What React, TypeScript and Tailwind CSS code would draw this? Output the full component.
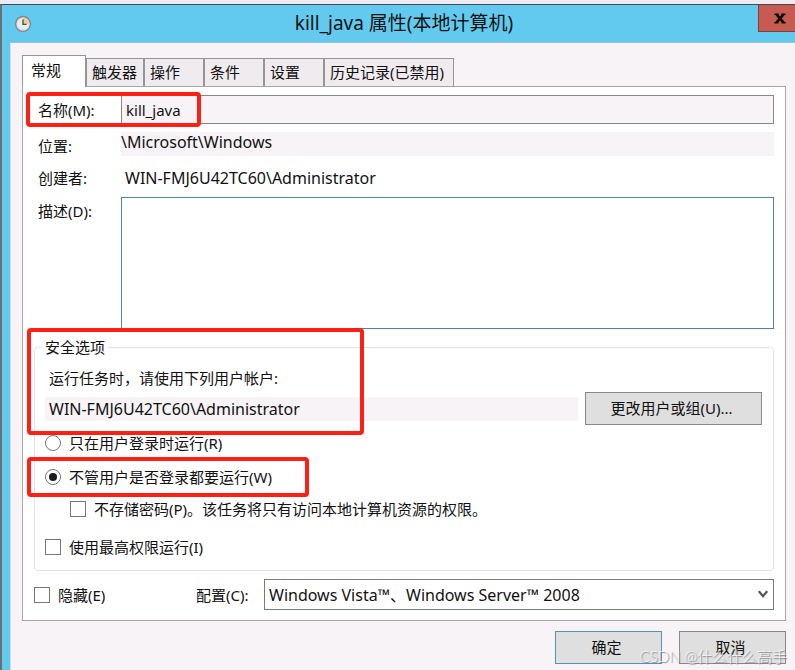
import React, { useState } from 'react';
import clsx from 'clsx';

const TABS = [
    { label: '常规', width: 'min-w-16' },
    { label: '触发器', width: 'min-w-[58px]' },
    { label: '操作', width: 'min-w-[60px]' },
    { label: '条件', width: 'min-w-[60px]' },
    { label: '设置', width: 'min-w-[60px]' },
    { label: '历史记录(已禁用)', width: 'min-w-[130px]' },
];

const ClockIcon: React.FC = () => (
    <svg width="18" height="18" viewBox="0 0 18 18" aria-hidden="true">
        <circle cx="9" cy="9" r="7.4" fill="#e9edf0" stroke="#858a8e" strokeWidth="1.6" />
        <path d="M9 9V2.6A6.4 6.4 0 0 1 15.4 9Z" fill="#f3cd78" />
        <circle cx="9" cy="9" r="6" fill="none" stroke="#d3d8db" strokeWidth="0.8" />
        <path d="M9 4.4V9.4H12.6" fill="none" stroke="#4b5258" strokeWidth="1.4" />
    </svg>
);

const CloseIcon: React.FC = () => (
    <svg width="12" height="11" viewBox="0 0 12 11" aria-hidden="true">
        <path d="M0.4 0.5H4.8V1.8L6 3.5L7.3 1.8V0.5H11.6V1.9H10.7L7.8 5.4L10.8 9.1H11.8V10.5H7.4V9.2L6 7.3L4.6 9.2V10.5H0.2V9.1H1.2L4.2 5.4L1.4 1.9H0.4Z" fill="#120808" />
    </svg>
);

// Red frame drawn over the settings that matter
const Highlight: React.FC<{ className: string }> = ({ className }) => (
    <div className={clsx('pointer-events-none absolute rounded-sm border-4 border-[#ff2015]', className)} />
);

const Choice: React.FC<{
    type: 'radio' | 'checkbox';
    label: string;
    checked: boolean;
    onChange: () => void;
    name?: string;
}> = ({ type, label, checked, onChange, name }) => (
    <label className="flex h-6 items-center gap-2 whitespace-nowrap">
        <span className="grid size-4 place-items-center">
            <input
                type={type}
                name={name}
                checked={checked}
                onChange={onChange}
                className={clsx(
                    'col-start-1 row-start-1 size-4 appearance-none border border-[#777] bg-white',
                    type === 'radio' && 'rounded-full'
                )}
            />
            {checked && type === 'radio' && <span className="pointer-events-none col-start-1 row-start-1 size-2 rounded-full bg-[#1c1c1c]" />}
            {checked && type === 'checkbox' && (
                <svg className="pointer-events-none col-start-1 row-start-1" width="12" height="12" viewBox="0 0 12 12">
                    <path d="M2 6l3 3 5-6" fill="none" stroke="#1c1c1c" strokeWidth="1.6" />
                </svg>
            )}
        </span>
        {label}
    </label>
);

const App: React.FC = () => {
    const [activeTab, setActiveTab] = useState('常规');
    const [name, setName] = useState('kill_java');
    const [description, setDescription] = useState('');
    const [runMode, setRunMode] = useState<'loggedOn' | 'always'>('always');
    const [noPassword, setNoPassword] = useState(false);
    const [highest, setHighest] = useState(false);
    const [hidden, setHidden] = useState(false);

    return (
        <div className="relative flex min-h-screen flex-col bg-[#edebf1] pt-1 font-['Noto_Sans','Noto_Sans_CJK_SC',sans-serif] text-[15px] leading-6 text-[#111]">
            <div className="flex grow flex-col border-t border-l-2 border-t-[#444a50] border-l-[#6b7075] bg-[#62caef]">
                <header className="flex h-[37px] items-start">
                    <div className="flex w-12 pt-2.5 pl-3">
                        <ClockIcon />
                    </div>
                    <h1 className="grow pt-1.5 text-center text-[19px]">kill_java 属性(本地计算机)</h1>
                    <button aria-label="关闭" className="flex h-[27px] w-[37px] justify-center border border-t-0 border-r-0 border-[#7a4340] bg-[#c75a51] pt-2 pl-1.5">
                        <CloseIcon />
                    </button>
                </header>

                <main className="ml-2 flex grow flex-col border-t border-l border-t-[#9fbfd4] border-l-[#c5e3f3] bg-[#f7f3f7] pt-3 pr-[9px] pl-[11px]">
                    <nav className="flex items-end">
                        {TABS.map(tab => (
                            <button
                                key={tab.label}
                                onClick={() => setActiveTab(tab.label)}
                                className={clsx(
                                    'border border-b-0 border-[#939599] text-left whitespace-nowrap',
                                    tab.width,
                                    tab.label === activeTab
                                        ? 'relative z-10 -mb-px h-8 bg-white px-2 pb-1'
                                        : 'h-7 bg-[#efebef] px-[5px] pb-0.5'
                                )}
                            >
                                {tab.label}
                            </button>
                        ))}
                    </nav>

                    <section className="border border-[#a5a5a9] bg-white px-[11px] pt-2 pb-2.5">
                        <div className="relative flex h-[29px] items-center">
                            <label htmlFor="name" className="w-[87px] shrink-0 pl-1">名称(M):</label>
                            <input
                                id="name"
                                value={name}
                                onChange={e => setName(e.target.value)}
                                className="h-full min-w-0 grow border border-[#88888b] bg-[#f7f3f7] px-1"
                            />
                            <Highlight className="-top-[3px] -left-2 h-[35px] w-[175px]" />
                        </div>
                        <div className="mt-2 flex">
                            <span className="w-[87px] shrink-0 pt-0.5 pl-1">位置:</span>
                            <span className="h-6 grow bg-[#f7f3f7] text-base leading-5">\Microsoft\Windows</span>
                        </div>
                        <div className="mt-2 flex">
                            <span className="w-[87px] shrink-0 pl-1">创建者:</span>
                            <span className="pl-1 text-base leading-6">WIN-FMJ6U42TC60\Administrator</span>
                        </div>
                        <div className="mt-[7px] flex">
                            <label htmlFor="description" className="w-[87px] shrink-0 pt-0.5 pl-1">描述(D):</label>
                            <textarea
                                id="description"
                                value={description}
                                onChange={e => setDescription(e.target.value)}
                                className="h-[132px] min-w-0 grow resize-none border border-[#4c82ad] bg-white px-1"
                            />
                        </div>

                        <div className="relative mt-1.5">
                            <fieldset className="rounded border border-[#dce5ec] px-[7px] pb-[11px]">
                                <legend className="px-[3px]">安全选项</legend>
                                <div className="pt-[7px] pl-[3px]">
                                    <p className="pl-1">运行任务时，请使用下列用户帐户:</p>
                                    <div className="mt-0.5 flex h-[33px] items-center gap-[7px] pr-1">
                                        <span className="grow bg-[#f7f3f7] pl-1 text-base leading-6">WIN-FMJ6U42TC60\Administrator</span>
                                        <button className="h-full w-[177px] border border-[#88888a] bg-[#dfdfdf] pr-1 pb-0.5">更改用户或组(U)...</button>
                                    </div>
                                    <div className="mt-1.5">
                                        <Choice type="radio" name="runMode" label="只在用户登录时运行(R)" checked={runMode === 'loggedOn'} onChange={() => setRunMode('loggedOn')} />
                                    </div>
                                    <div className="relative mt-2.5">
                                        <Choice type="radio" name="runMode" label="不管用户是否登录都要运行(W)" checked={runMode === 'always'} onChange={() => setRunMode('always')} />
                                        <Highlight className="-top-2 -left-[18px] h-10 w-[282px]" />
                                    </div>
                                    <div className="mt-2 pl-[25px]">
                                        <Choice type="checkbox" label="不存储密码(P)。该任务将只有访问本地计算机资源的权限。" checked={noPassword} onChange={() => setNoPassword(!noPassword)} />
                                    </div>
                                    <div className="mt-3.5">
                                        <Choice type="checkbox" label="使用最高权限运行(I)" checked={highest} onChange={() => setHighest(!highest)} />
                                    </div>
                                </div>
                            </fieldset>
                            <Highlight className="-top-[7px] -left-[7px] h-[107px] w-[337px]" />
                        </div>

                        <div className="mt-2 flex items-center">
                            <div className="w-[162px] shrink-0">
                                <Choice type="checkbox" label="隐藏(E)" checked={hidden} onChange={() => setHidden(!hidden)} />
                            </div>
                            <label htmlFor="config" className="w-[68px] shrink-0">配置(C):</label>
                            <div className="grid grow items-center">
                                <select id="config" className="col-start-1 row-start-1 h-[31px] w-full appearance-none border border-[#7b7b7d] bg-white px-1 text-base leading-6">
                                    <option>Windows Vista™、Windows Server™ 2008</option>
                                </select>
                                <svg className="pointer-events-none col-start-1 row-start-1 mr-1.5 justify-self-end" width="10" height="9" viewBox="0 0 10 9">
                                    <path d="M0.8 1.2L5 6.2L9.2 1.2" fill="none" stroke="#58585a" strokeWidth="2.3" />
                                </svg>
                            </div>
                        </div>
                    </section>

                    <footer className="mt-2.5 flex justify-end gap-[17px] pb-1.5">
                        <button className="h-[33px] w-[107px] border border-[#5592c0] bg-[#dfdfdf] pr-1 pb-0.5">确定</button>
                        <button className="h-[33px] w-[107px] border border-[#88888a] bg-[#dfdfdf] pr-1 pb-0.5">取消</button>
                    </footer>
                </main>
            </div>
            <span className="pointer-events-none absolute right-2 bottom-0.5 font-[Lato,'Noto_Sans_CJK_SC',sans-serif] text-[15px] leading-6 font-light text-white/80 [text-shadow:1px_1px_1px_#77777a]">CSDN @什么什么高手</span>
        </div>
    );
};

export default App;
